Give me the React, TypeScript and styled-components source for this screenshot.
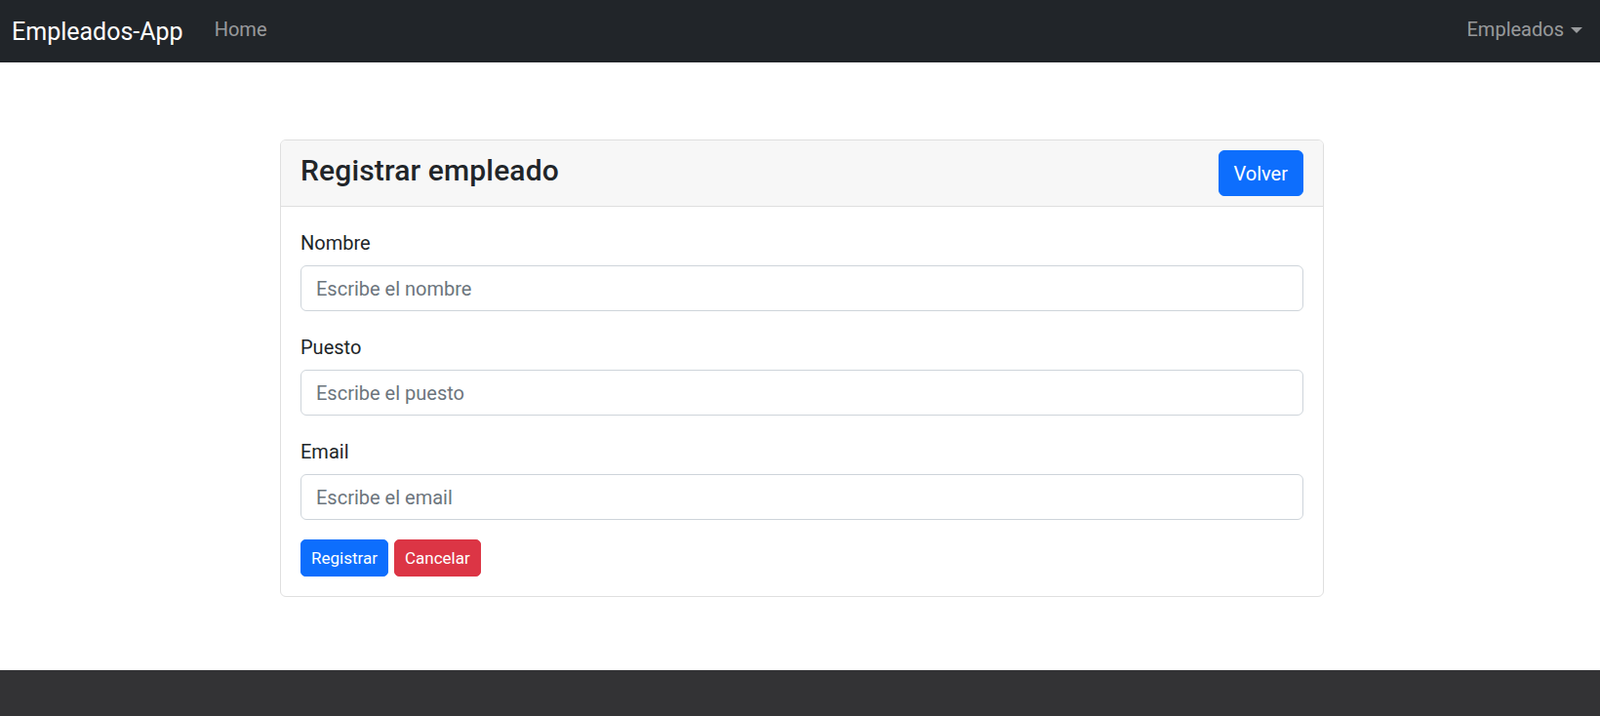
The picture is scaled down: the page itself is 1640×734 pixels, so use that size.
import React from "react";
import styled, { createGlobalStyle } from "styled-components";

const GlobalStyle = createGlobalStyle`
  * { box-sizing: border-box; }
  html, body { margin: 0; padding: 0; }
  body {
    font-family: Roboto, "Liberation Sans", Arial, sans-serif;
    color: #212529;
    background: #ffffff;
  }
`;

const Page = styled.div`
  min-height: 734px;
  display: flex;
  flex-direction: column;
`;

const NavBar = styled.nav`
  height: 64px;
  background: #212529;
  display: flex;
  align-items: center;
  justify-content: space-between;
  padding: 0 18px 0 12px;
`;

const NavLeft = styled.div`
  display: flex;
  align-items: center;
  gap: 32px;
`;

const Brand = styled.a`
  font-size: 25px;
  line-height: 37px;
  color: #ffffff;
  text-decoration: none;
`;

const NavLink = styled.a`
  font-size: 20px;
  line-height: 30px;
  color: rgba(255, 255, 255, 0.55);
  text-decoration: none;
  padding-bottom: 4px;
  display: inline-flex;
  align-items: center;
`;

const Caret = styled.span`
  display: inline-block;
  margin-left: 7px;
  margin-top: 1px;
  width: 0;
  height: 0;
  border-top: 6px solid rgba(255, 255, 255, 0.55);
  border-left: 6px solid transparent;
  border-right: 6px solid transparent;
`;

const Main = styled.main`
  flex: 1;
  display: flex;
  justify-content: center;
  align-items: flex-start;
  padding: 79px 0 0 4px;
`;

const Card = styled.section`
  width: 1070px;
  border: 1px solid #dfdfdf;
  border-radius: 6px;
  overflow: hidden;
  background: #ffffff;
`;

const CardHeader = styled.header`
  display: flex;
  align-items: center;
  justify-content: space-between;
  padding: 10px 20px;
  background: #f7f7f7;
  border-bottom: 1px solid #dfdfdf;
`;

const Title = styled.h4`
  margin: 0 0 6px 0;
  font-size: 30px;
  font-weight: 500;
  line-height: 36px;
  letter-spacing: 0.15px;
  color: #212529;
`;

const Button = styled.button<{ $variant: "primary" | "danger"; $size?: "sm" | "md" }>`
  font-family: inherit;
  border: 1px solid
    ${(p) => (p.$variant === "primary" ? "#0d6efd" : "#dc3545")};
  background: ${(p) => (p.$variant === "primary" ? "#0d6efd" : "#dc3545")};
  color: #ffffff;
  cursor: pointer;
  height: ${(p) => (p.$size === "sm" ? "38px" : "47px")};
  padding: ${(p) => (p.$size === "sm" ? "0 10px" : "0 15px")};
  font-size: ${(p) => (p.$size === "sm" ? "17px" : "20px")};
  border-radius: ${(p) => (p.$size === "sm" ? "5px" : "6px")};
  line-height: 1;
`;

const CardBody = styled.form`
  padding: 20px;
  display: flex;
  flex-direction: column;
`;

const Field = styled.div`
  margin-bottom: 20px;
`;

const Label = styled.label`
  display: block;
  font-size: 20px;
  line-height: 30px;
  padding-top: 2px;
  margin-bottom: 8px;
  color: #212529;
`;

const Input = styled.input`
  display: block;
  width: 100%;
  height: 47px;
  padding: 0 15px;
  font-family: inherit;
  font-size: 20px;
  color: #212529;
  border: 1px solid #ced4da;
  border-radius: 6px;
  outline: none;
  &::placeholder {
    color: #6c757d;
  }
`;

const Actions = styled.div`
  display: flex;
  gap: 6px;
`;

const Footer = styled.footer`
  height: 47px;
  background: #333335;
`;

const fields = [
  { id: "nombre", label: "Nombre", placeholder: "Escribe el nombre" },
  { id: "puesto", label: "Puesto", placeholder: "Escribe el puesto" },
  { id: "email", label: "Email", placeholder: "Escribe el email" },
];

export default function App() {
  return (
    <>
      <GlobalStyle />
      <Page>
        <NavBar>
          <NavLeft>
            <Brand href="#">Empleados-App</Brand>
            <NavLink href="#">Home</NavLink>
          </NavLeft>
          <NavLink href="#">
            Empleados
            <Caret />
          </NavLink>
        </NavBar>
        <Main>
          <Card>
            <CardHeader>
              <Title>Registrar empleado</Title>
              <Button type="button" $variant="primary">
                Volver
              </Button>
            </CardHeader>
            <CardBody onSubmit={(e) => e.preventDefault()}>
              {fields.map((f) => (
                <Field key={f.id}>
                  <Label htmlFor={f.id}>{f.label}</Label>
                  <Input id={f.id} placeholder={f.placeholder} />
                </Field>
              ))}
              <Actions>
                <Button type="submit" $variant="primary" $size="sm">
                  Registrar
                </Button>
                <Button type="button" $variant="danger" $size="sm">
                  Cancelar
                </Button>
              </Actions>
            </CardBody>
          </Card>
        </Main>
        <Footer />
      </Page>
    </>
  );
}
